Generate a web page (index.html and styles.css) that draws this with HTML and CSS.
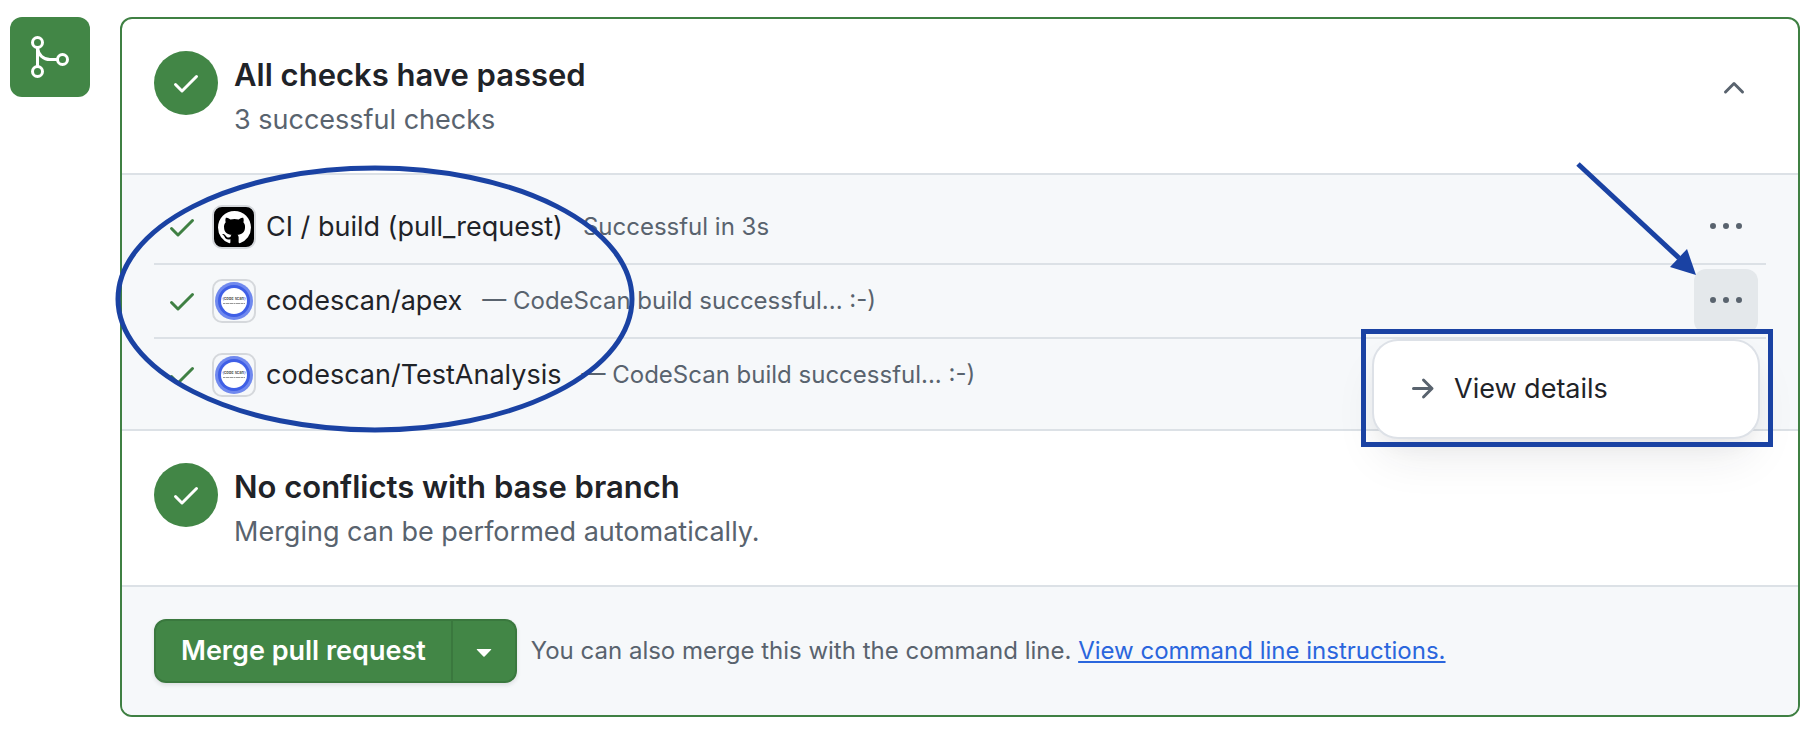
FILE: index.html
```
<!DOCTYPE html>
<html lang="en">
<head>
<meta charset="utf-8">
<meta name="viewport" content="width=device-width, initial-scale=1">
<title>Pull request checks</title>
<link rel="stylesheet" href="styles.css">
</head>
<body>
<svg class="defs" aria-hidden="true">
  <symbol id="check" viewBox="0 0 16 16">
    <path d="M13.78 4.22a.75.75 0 0 1 0 1.06l-7.25 7.25a.75.75 0 0 1-1.06 0L2.22 9.28a.751.751 0 0 1 .018-1.042.751.751 0 0 1 1.042-.018L6 10.94l6.72-6.72a.75.75 0 0 1 1.06 0Z"/>
  </symbol>
  <symbol id="kebab" viewBox="0 0 16 16">
    <path d="M8 9a1.5 1.5 0 1 0 0-3 1.5 1.5 0 0 0 0 3ZM1.5 9a1.5 1.5 0 1 0 0-3 1.5 1.5 0 0 0 0 3Zm13 0a1.5 1.5 0 1 0 0-3 1.5 1.5 0 0 0 0 3Z"/>
  </symbol>
</svg>
<main class="merge">
  <div class="merge-badge">
    <svg viewBox="0 0 24 24" width="48" height="48" fill="none" stroke="#fff" stroke-width="1.5" aria-hidden="true">
      <circle cx="5.75" cy="4.75" r="2.5"/>
      <circle cx="5.75" cy="19.25" r="2.5"/>
      <circle cx="18.25" cy="13.25" r="2.5"/>
      <path d="M5.75 7.25v9.5M5.75 7.5c.4 3.4 2.9 5.75 6.25 5.75h3.75"/>
    </svg>
  </div>
  <div class="panel">
    <section class="summary">
      <span class="status"><svg class="icon" aria-hidden="true"><use href="#check"/></svg></span>
      <div class="summary-text">
        <h2>All checks have passed</h2>
        <p>3 successful checks</p>
      </div>
      <button class="icon-button collapse" type="button" aria-label="Collapse checks">
        <svg class="icon" viewBox="0 0 16 16" aria-hidden="true"><path d="M3.22 10.53a.749.749 0 0 1 0-1.06l4.25-4.25a.749.749 0 0 1 1.06 0l4.25 4.25a.749.749 0 1 1-1.06 1.06L8 6.811 4.28 10.53a.749.749 0 0 1-1.06 0Z"/></svg>
      </button>
    </section>

    <section class="checks">
      <ul class="check-list">
        <li class="check">
          <svg class="icon passed" aria-hidden="true"><use href="#check"/></svg>
          <span class="avatar avatar-dark">
            <svg viewBox="0 0 16 16" width="33" height="33" fill="#fff" aria-hidden="true"><path d="M8 0c4.42 0 8 3.58 8 8a8.013 8.013 0 0 1-5.45 7.59c-.4.08-.55-.17-.55-.38 0-.27.01-1.13.01-2.2 0-.75-.25-1.23-.54-1.48 1.78-.2 3.65-.88 3.65-3.95 0-.88-.31-1.59-.82-2.15.08-.2.36-1.02-.08-2.12 0 0-.67-.22-2.2.82-.64-.18-1.32-.27-2-.27-.68 0-1.36.09-2 .27-1.53-1.03-2.2-.82-2.2-.82-.44 1.1-.16 1.92-.08 2.12-.51.56-.82 1.28-.82 2.15 0 3.06 1.86 3.75 3.64 3.95-.23.2-.44.55-.51 1.07-.46.21-1.61.55-2.33-.66-.15-.24-.6-.83-1.23-.82-.67.01-.27.38.01.53.34.19.73.9.82 1.13.16.45.68 1.31 2.69.94 0 .67.01 1.3.01 1.49 0 .21-.15.45-.55.38A7.995 7.995 0 0 1 0 8c0-4.42 3.58-8 8-8Z"/></svg>
          </span>
          <span class="check-name">CI / build (pull_request)</span>
          <span class="check-note">Successful in 3s</span>
          <button class="icon-button more" type="button" aria-label="More actions"><svg class="icon" aria-hidden="true"><use href="#kebab"/></svg></button>
        </li>
        <li class="check">
          <svg class="icon passed" aria-hidden="true"><use href="#check"/></svg>
          <span class="avatar">
            <svg class="logo" viewBox="0 0 40 40" width="40" height="40" aria-hidden="true">
              <circle cx="20" cy="20" r="19" fill="#7089ee"/>
              <circle cx="20" cy="20" r="16" fill="#3f5fe6"/>
              <circle cx="20" cy="20" r="13" fill="#fff"/>
              <text x="20" y="19" text-anchor="middle"><tspan>{</tspan>code scan<tspan>}</tspan></text>
              <path d="M9 22.5h22"/>
            </svg>
          </span>
          <span class="check-name">codescan/apex</span>
          <span class="check-note">— CodeScan build successful... :-)</span>
          <button class="icon-button more active" type="button" aria-label="More actions" aria-expanded="true"><svg class="icon" aria-hidden="true"><use href="#kebab"/></svg></button>
        </li>
        <li class="check">
          <svg class="icon passed" aria-hidden="true"><use href="#check"/></svg>
          <span class="avatar">
            <svg class="logo" viewBox="0 0 40 40" width="40" height="40" aria-hidden="true">
              <circle cx="20" cy="20" r="19" fill="#7089ee"/>
              <circle cx="20" cy="20" r="16" fill="#3f5fe6"/>
              <circle cx="20" cy="20" r="13" fill="#fff"/>
              <text x="20" y="19" text-anchor="middle"><tspan>{</tspan>code scan<tspan>}</tspan></text>
              <path d="M9 22.5h22"/>
            </svg>
          </span>
          <span class="check-name">codescan/TestAnalysis</span>
          <span class="check-note">— CodeScan build successful... :-)</span>
        </li>
      </ul>
      <div class="menu">
        <a class="menu-item" href="#details">
          <svg class="icon" viewBox="0 0 16 16" aria-hidden="true"><path d="M8.22 2.97a.75.75 0 0 1 1.06 0l4.25 4.25a.75.75 0 0 1 0 1.06l-4.25 4.25a.751.751 0 0 1-1.042-.018.751.751 0 0 1-.018-1.042l2.97-2.97H3.75a.75.75 0 0 1 0-1.5h7.44L8.22 4.03a.75.75 0 0 1 0-1.06Z"/></svg>
          View details
        </a>
      </div>
      <svg class="mark mark-ellipse" viewBox="0 0 520 268" fill="none" aria-hidden="true"><ellipse cx="260" cy="134" rx="257" ry="131"/></svg>
      <svg class="mark mark-arrow" viewBox="0 0 120 114" aria-hidden="true"><path d="M1 2 102 96"/><path class="head" d="M119 113 93 105 110 87Z"/></svg>
      <div class="mark mark-box"></div>
    </section>

    <section class="summary">
      <span class="status"><svg class="icon" aria-hidden="true"><use href="#check"/></svg></span>
      <div class="summary-text">
        <h2>No conflicts with base branch</h2>
        <p>Merging can be performed automatically.</p>
      </div>
    </section>

    <footer class="actions">
      <div class="button-group">
        <button class="merge-button" type="button">Merge pull request</button>
        <button class="merge-options" type="button" aria-label="Select merge method">
          <svg class="icon" viewBox="0 0 16 16" aria-hidden="true"><path d="m4.427 7.427 3.396 3.396a.25.25 0 0 0 .354 0l3.396-3.396A.25.25 0 0 0 11.396 7H4.604a.25.25 0 0 0-.177.427Z"/></svg>
        </button>
      </div>
      <p class="hint">You can also merge this with the command line. <a href="#command-line">View command line instructions.</a></p>
    </footer>
  </div>
</main>
</body>
</html>
```
FILE: styles.css
```
* {
  box-sizing: border-box;
}

body {
  margin: 0;
  background: #fff;
  color: #1f2328;
  font-family: Inter, "Liberation Sans", sans-serif;
  font-size: 27px;
  line-height: 42px;
}

h2,
p,
ul {
  margin: 0;
  padding: 0;
}

button {
  font: inherit;
  cursor: pointer;
}

.defs {
  position: absolute;
  width: 0;
  height: 0;
}

.icon {
  display: block;
  flex: none;
  width: 32px;
  height: 32px;
  fill: currentColor;
}

.merge {
  display: flex;
  align-items: flex-start;
  gap: 30px;
  padding: 17px 16px 24px 10px;
}

.merge-badge {
  display: grid;
  flex: none;
  place-items: center;
  width: 80px;
  height: 80px;
  border-radius: 12px;
  background: #428646;
}

.panel {
  flex: 1;
  min-width: 0;
  border: 2px solid #3f8043;
  border-radius: 12px;
}

.summary {
  display: flex;
  gap: 16px;
  padding: 32px;
}

.status {
  display: grid;
  flex: none;
  place-items: center;
  width: 64px;
  height: 64px;
  border-radius: 50%;
  background: #428646;
  color: #fff;
}

.summary-text {
  flex: 1;
}

.summary h2 {
  font-size: 31px;
  font-weight: 600;
  line-height: 48px;
}

.summary p {
  color: #59636e;
}

.icon-button {
  display: grid;
  flex: none;
  place-items: center;
  width: 64px;
  height: 64px;
  padding: 0;
  border: 0;
  border-radius: 12px;
  background: none;
  color: #59636e;
}

.collapse {
  margin-top: 5px;
}

.checks {
  position: relative;
  padding: 16px 32px 18px;
  border-top: 2px solid #dce1e6;
  border-bottom: 2px solid #dce1e6;
  background: #f6f8fa;
}

.check-list {
  list-style: none;
}

.check {
  display: flex;
  align-items: center;
  min-height: 72px;
  padding: 0 8px 0 12px;
}

.check + .check {
  border-top: 2px solid #dce1e6;
  min-height: 74px;
}

.passed {
  color: #3f8043;
}

.avatar {
  display: grid;
  flex: none;
  place-items: center;
  width: 44px;
  height: 44px;
  margin: 0 10px 0 14px;
  border: 2px solid #d5d8dc;
  border-radius: 10px;
}

.avatar-dark {
  background: #000;
}

.logo text {
  font-size: 4px;
  font-weight: 600;
  fill: #444;
}

.logo tspan {
  fill: #3f5fe6;
}

.logo path {
  stroke: #999;
  stroke-width: 1;
  stroke-dasharray: 2 0.5 4 0.5 3 0.5;
}

.check-note {
  margin-left: 20px;
  color: #59636e;
  font-size: 24px;
}

.more {
  margin-left: auto;
}

.active {
  background: #e4e8eb;
}

.menu {
  position: absolute;
  top: 166px;
  right: 40px;
  width: 384px;
  padding: 16px;
  border-radius: 24px;
  background: #fff;
  box-shadow: 0 0 0 2px #dde1e7, 0 12px 24px -6px rgba(37, 41, 46, 0.06), 0 24px 48px -8px rgba(37, 41, 46, 0.1);
}

.menu-item {
  display: flex;
  align-items: center;
  gap: 16px;
  height: 64px;
  padding: 0 16px;
  color: inherit;
  text-decoration: none;
}

.menu-item .icon {
  color: #59636e;
}

.mark {
  position: absolute;
  pointer-events: none;
  fill: none;
  stroke: #1a42a3;
  stroke-width: 5;
}

.mark-ellipse {
  top: -10px;
  left: -7px;
  width: 520px;
  height: 268px;
}

.mark-arrow {
  top: -13px;
  right: 101px;
  width: 120px;
  height: 114px;
  overflow: visible;
}

.mark-arrow .head {
  fill: #1a42a3;
  stroke: none;
}

.mark-box {
  top: 154px;
  right: 25px;
  width: 412px;
  height: 118px;
  border: 5px solid #1a42a3;
}

.actions {
  display: flex;
  align-items: center;
  gap: 14px;
  padding: 32px;
  border-top: 2px solid #dce1e6;
  border-radius: 0 0 10px 10px;
  background: #f6f8fa;
}

.button-group {
  display: flex;
  flex: none;
  height: 64px;
  border-radius: 12px;
  box-shadow: 0 2px 4px rgba(31, 35, 40, 0.12);
}

.merge-button,
.merge-options {
  border: 2px solid #3a783e;
  background: #428646;
  color: #fff;
}

.merge-button {
  padding: 0 25px;
  border-radius: 12px 0 0 12px;
  font-weight: 600;
}

.merge-options {
  padding: 0 15px;
  border-left: 0;
  border-radius: 0 12px 12px 0;
}

.hint {
  color: #59636e;
  font-size: 24px;
}

.hint a {
  color: #2a66dd;
  text-decoration: underline;
}
```
